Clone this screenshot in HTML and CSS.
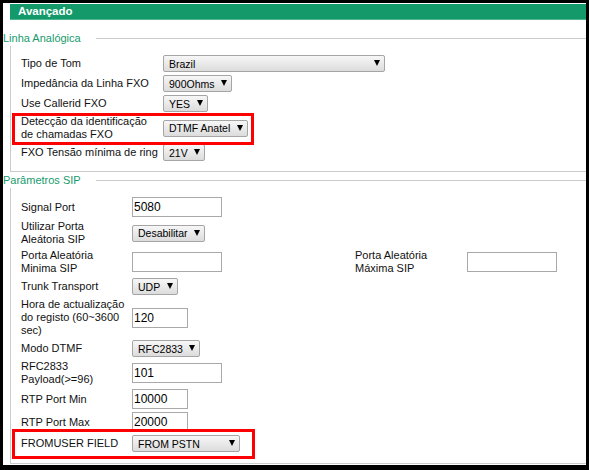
FILE: index.html
```html
<!DOCTYPE html>
<html lang="pt">
<head>
  <meta charset="UTF-8">
  <title>Avançado</title>
  <link rel="stylesheet" href="styles.css">
</head>
<body>

<div class="frame">
  <div class="title-bar">Avançado</div>

  <!-- Linha analogica -->
  <div class="group">
    <div class="group-title"><span>Linha Analógica</span></div>
    <div class="group-body">
      <table class="form">
        <tr>
          <td class="lbl-fxo">Tipo de Tom</td>
          <td><span class="sel"><select class="sel-wide"><option selected>Brazil</option><option>Chile</option><option>USA</option></select></span></td>
        </tr>
        <tr>
          <td class="lbl-fxo">Impedância da Linha FXO</td>
          <td><span class="sel"><select><option>600Ohms</option><option selected>900Ohms</option></select></span></td>
        </tr>
        <tr>
          <td class="lbl-fxo">Use Callerid FXO</td>
          <td><span class="sel"><select><option selected>YES</option><option>NO</option></select></span></td>
        </tr>
        <tr>
          <td class="lbl-fxo">Detecção da identificação<br>de chamadas FXO</td>
          <td><span class="sel"><select><option selected>DTMF Anatel</option><option>DTMF</option></select></span></td>
        </tr>
        <tr>
          <td class="lbl-fxo">FXO Tensão mínima de ring</td>
          <td><span class="sel"><select><option>15V</option><option>18V</option><option selected>21V</option></select></span></td>
        </tr>
      </table>
    </div>
  </div>

  <!-- Parametros SIP -->
  <div class="group">
    <div class="group-title"><span>Parâmetros SIP</span></div>
    <div class="group-body group-sip">
      <table class="form">
        <tr>
          <td class="lbl-sip">Signal Port</td>
          <td class="fld-sip"><input class="txt" type="text" value="5080"></td>
        </tr>
        <tr>
          <td class="lbl-sip">Utilizar Porta<br>Aleátoria SIP</td>
          <td class="fld-sip"><span class="sel"><select><option selected>Desabilitar</option><option>Habilitar</option></select></span></td>
        </tr>
        <tr>
          <td class="lbl-sip">Porta Aleatória<br>Minima SIP</td>
          <td class="fld-sip"><input class="txt" type="text" value=""></td>
          <td class="lbl-right">Porta Aleatória<br>Máxima SIP</td>
          <td><input class="txt" type="text" value=""></td>
        </tr>
        <tr>
          <td class="lbl-sip">Trunk Transport</td>
          <td class="fld-sip"><span class="sel"><select><option selected>UDP</option><option>TCP</option></select></span></td>
        </tr>
        <tr>
          <td class="lbl-sip">Hora de actualização<br>do registo (60~3600<br>sec)</td>
          <td class="fld-sip"><input class="txt txt-short" type="text" value="120"></td>
        </tr>
        <tr>
          <td class="lbl-sip">Modo DTMF</td>
          <td class="fld-sip"><span class="sel"><select><option selected>RFC2833</option><option>INBAND</option></select></span></td>
        </tr>
        <tr>
          <td class="lbl-sip">RFC2833<br>Payload(&gt;=96)</td>
          <td class="fld-sip"><input class="txt" type="text" value="101"></td>
        </tr>
        <tr>
          <td class="lbl-sip">RTP Port Min</td>
          <td class="fld-sip"><input class="txt txt-short" type="text" value="10000"></td>
        </tr>
        <tr>
          <td class="lbl-sip">RTP Port Max</td>
          <td class="fld-sip"><input class="txt txt-short" type="text" value="20000"></td>
        </tr>
        <tr>
          <td class="lbl-sip">FROMUSER FIELD</td>
          <td class="fld-sip"><span class="sel"><select class="sel-mid"><option selected>FROM PSTN</option><option>FROM DISPLAY</option></select></span></td>
        </tr>
      </table>
    </div>
  </div>

  <!-- red highlight boxes -->
  <div class="mark mark-fxo"></div>
  <div class="mark mark-fromuser"></div>
</div>

</body>
</html>
```

FILE: styles.css
```css
body {
  margin: 0;
  background: #000;
  font-family: "Liberation Sans", Arial, sans-serif;
  font-size: 11px;
  line-height: 13px;
  color: #111;
}
.frame {
  position: relative;
  margin: 3px 3px 0 3px;
  height: 462px;
  background: #fff;
  overflow: hidden;
}
.title-bar {
  margin: 1px 0 0 7px;
  height: 15px;
  line-height: 15px;
  padding-left: 8px;
  background: #13996a;
  border-bottom: 1px solid #4fb58e;
  color: #fff;
  font-weight: bold;
  font-size: 11.5px;
}
.group {
  margin-left: 7px;
}
.title-bar + .group {
  margin-top: 10px;
}
.group-title {
  display: flex;
  align-items: center;
  height: 16px;
  margin-left: -7px;
}
.group-title span {
  width: 93px;
  color: #169b6c;
  white-space: nowrap;
}
.group-title::after {
  content: "";
  flex: 1;
  border-top: 1px solid #cbcbcb;
}
.group-body {
  border-left: 1px solid #cbcbcb;
  border-bottom: 1px solid #cbcbcb;
  padding: 7px 0 8px 8px;
}
.group-sip {
  padding-bottom: 9px;
}
.form {
  border-collapse: separate;
  border-spacing: 0 1px;
}
.form td {
  padding: 1px 2px;
  vertical-align: middle;
  white-space: nowrap;
}
.lbl-fxo {
  width: 138px;
}
.lbl-sip {
  width: 107px;
}
.fld-sip {
  width: 219px;
}
.lbl-right {
  width: 108px;
}
.sel {
  position: relative;
  display: flex;
  width: max-content;
}
.sel select {
  -webkit-appearance: none;
  appearance: none;
  display: block;
  margin: 0;
  height: 17px;
  padding: 0 16px 0 5px;
  border: 1px solid #a5a5a5;
  border-radius: 2px;
  background: linear-gradient(#f7f7f7, #dcdcdc);
  font-family: "Liberation Sans", Arial, sans-serif;
  font-size: 10.5px;
  color: #000;
}
.sel::after {
  content: "";
  position: absolute;
  right: 5px;
  top: 5px;
  border-left: 3px solid transparent;
  border-right: 3px solid transparent;
  border-top: 6px solid #000;
  pointer-events: none;
}
.sel select.sel-wide {
  width: 222px;
}
.sel select.sel-mid {
  width: 108px;
}
.txt {
  display: block;
  box-sizing: border-box;
  margin: 0;
  width: 90px;
  height: 20px;
  padding: 0 1px;
  border: 1px solid #a9a9a9;
  font-family: "Liberation Sans", Arial, sans-serif;
  font-size: 12px;
  color: #000;
  background: #fff;
}
.txt-short {
  width: 56px;
}
.mark {
  position: absolute;
  box-sizing: border-box;
  border: 3px solid #f00;
  pointer-events: none;
}
.mark-fxo {
  left: 9px;
  top: 110px;
  width: 242px;
  height: 32px;
}
.mark-fromuser {
  left: 9px;
  top: 426px;
  width: 243px;
  height: 30px;
}
```
